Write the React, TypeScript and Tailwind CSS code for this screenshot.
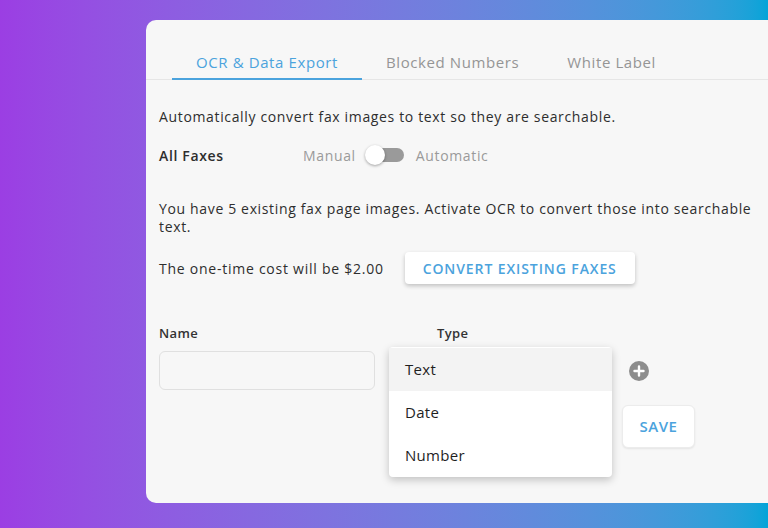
import * as React from 'react'

const tabs = ['OCR & Data Export', 'Blocked Numbers', 'White Label']
const types = ['Text', 'Date', 'Number']

function Toggle() {
  return (
    <div className="relative h-5 w-[40px]">
      <div className="absolute left-[7px] top-[3px] h-[14px] w-[32px] rounded-full bg-[#9a9a9a]" />
      <div className="absolute left-0 top-0 h-5 w-5 rounded-full bg-white shadow-[0_1px_3px_rgba(0,0,0,0.35)]" />
    </div>
  )
}

function PlusIcon() {
  return (
    <svg width="20" height="20" viewBox="0 0 20 20">
      <circle cx="10" cy="10" r="10" fill="#8d8d8d" />
      <path d="M10 5.5v9M5.5 10h9" stroke="#fff" strokeWidth="2.4" strokeLinecap="round" />
    </svg>
  )
}

export default function App() {
  const [active] = React.useState(0)

  return (
    <div className="h-[528px] w-full overflow-hidden bg-linear-to-r from-[#9b3ee3] to-[#02a4d8] pt-[20px] font-['Open_Sans',sans-serif]">
      <div className="ml-[146px] h-[483px] w-[640px] rounded-[10px] bg-[#f7f7f7]">
        {/* Tabs */}
        <div className="flex border-b border-[#e6e6e6] pl-[26px] pt-[32px]">
          {tabs.map((tab, i) => (
            <div
              key={tab}
              className={`-mb-px border-b-2 px-6 pb-[6px] text-[15px] leading-5 tracking-[0.6px] ${
                i === active ? 'border-[#4ba3dd] text-[#4ba3dd]' : 'border-transparent text-[#959595]'
              }`}
            >
              {tab}
            </div>
          ))}
        </div>

        <div className="pl-[13px] text-[14px] tracking-[0.65px] text-[#2e2e2e]">
          <p className="mt-[27px] leading-5">
            Automatically convert fax images to text so they are searchable.
          </p>

          <div className="mt-[18px] flex h-5 items-center">
            <span className="w-[144px] font-semibold">All Faxes</span>
            <span className="text-[#9a9a9a]">Manual</span>
            <div className="ml-[9px] mr-[11px]">
              <Toggle />
            </div>
            <span className="text-[#9a9a9a]">Automatic</span>
          </div>

          <p className="mt-[35px] w-[620px] leading-[18px]">
            You have 5 existing fax page images. Activate OCR to convert those into searchable
            <br />
            text.
          </p>

          <div className="mt-[16px] flex h-8 items-center">
            <span className="tracking-[0.75px]">The one-time cost will be $2.00</span>
            <button className="ml-[21px] h-8 w-[230px] rounded-[4px] bg-white text-[14px] font-semibold tracking-[0.9px] text-[#4ba3dd] shadow-[0_2px_4px_rgba(0,0,0,0.22)]">
              CONVERT EXISTING FAXES
            </button>
          </div>

          {/* Field row */}
          <div className="mt-[41px] flex">
            <div className="w-[216px]">
              <label className="block text-[13px] font-semibold leading-4 tracking-[0.4px] text-[#333]">Name</label>
              <input className="mt-[10px] h-[39px] w-full rounded-[6px] border border-[#e0e0e0] bg-[#f7f7f7] px-3 outline-none" />
            </div>

            <div className="relative ml-[14px] w-[223px]">
              <label className="block pl-[48px] text-[13px] font-semibold leading-4 tracking-[0.4px] text-[#333]">Type</label>
              <div className="mt-[10px] h-[39px]" />
              <div className="absolute left-0 top-[22px] w-[223px] rounded-[4px] bg-white pt-[1px] shadow-[0_3px_8px_rgba(0,0,0,0.22)]">
                {types.map((t, i) => (
                  <div
                    key={t}
                    className={`flex h-[43px] items-center px-4 text-[15px] tracking-[0.3px] text-[#1f1f1f] ${i === 0 ? 'bg-[#f3f3f3]' : ''}`}
                  >
                    {t}
                  </div>
                ))}
              </div>
            </div>

            <div className="ml-[10px] flex flex-col items-start">
              <div className="ml-[7px] mt-[36px]">
                <PlusIcon />
              </div>
              <button className="mt-[24px] h-[43px] w-[73px] rounded-[6px] border border-[#ececec] bg-white text-[15px] font-semibold tracking-[0.5px] text-[#4ba3dd] shadow-[0_1px_2px_rgba(0,0,0,0.08)]">
                SAVE
              </button>
            </div>
          </div>
        </div>
      </div>
    </div>
  )
}
